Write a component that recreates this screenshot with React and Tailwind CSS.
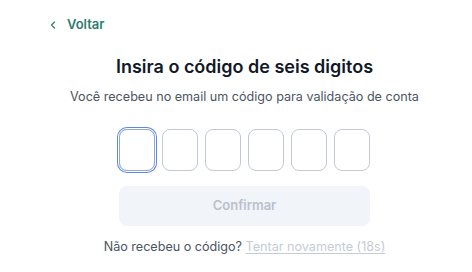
import { ChevronLeft } from 'lucide-react'

export default function App() {
  const digits = [0, 1, 2, 3, 4, 5]

  return (
    <div className="min-h-[272px] w-full bg-white pt-[16px] font-['Inter',sans-serif]">
      <button className="ml-[47px] flex h-[18px] items-center gap-[8px] text-[13px] font-semibold text-[#2f7d6e]">
        <ChevronLeft size={12} strokeWidth={2.5} />
        Voltar
      </button>

      <div className="flex flex-col items-center pl-[17px]">
        <h1 className="mt-[19px] text-[18px] leading-[28px] font-semibold text-[#111827]">
          Insira o código de seis digitos
        </h1>
        <p className="mt-[6px] text-[12.6px] leading-[20px] text-[#4b5563]">
          Você recebeu no email um código para validação de conta
        </p>

        <div className="mt-[22px] flex gap-[7px]">
          {digits.map((d) => (
            <input
              key={d}
              maxLength={1}
              className={
                d === 0
                  ? 'h-[42px] w-[36px] rounded-lg border border-[#8fa6d8] ring-1 ring-[#5f86e6] ring-offset-1 outline-none'
                  : 'h-[42px] w-[36px] rounded-lg border border-[#c3cad6] outline-none'
              }
            />
          ))}
        </div>

        <button
          disabled
          className="mt-[15px] h-[40px] w-[251px] rounded-lg bg-[#f1f4f9] text-[13px] font-semibold text-[#b9c1cd]"
        >
          Confirmar
        </button>

        <p className="mt-[11px] text-[12.6px] leading-[20px] text-[#4b5563]">
          Não recebeu o código?{' '}
          <span className="text-[#c5ccd6] underline underline-offset-2">Tentar novamente (18s)</span>
        </p>
      </div>
    </div>
  )
}
